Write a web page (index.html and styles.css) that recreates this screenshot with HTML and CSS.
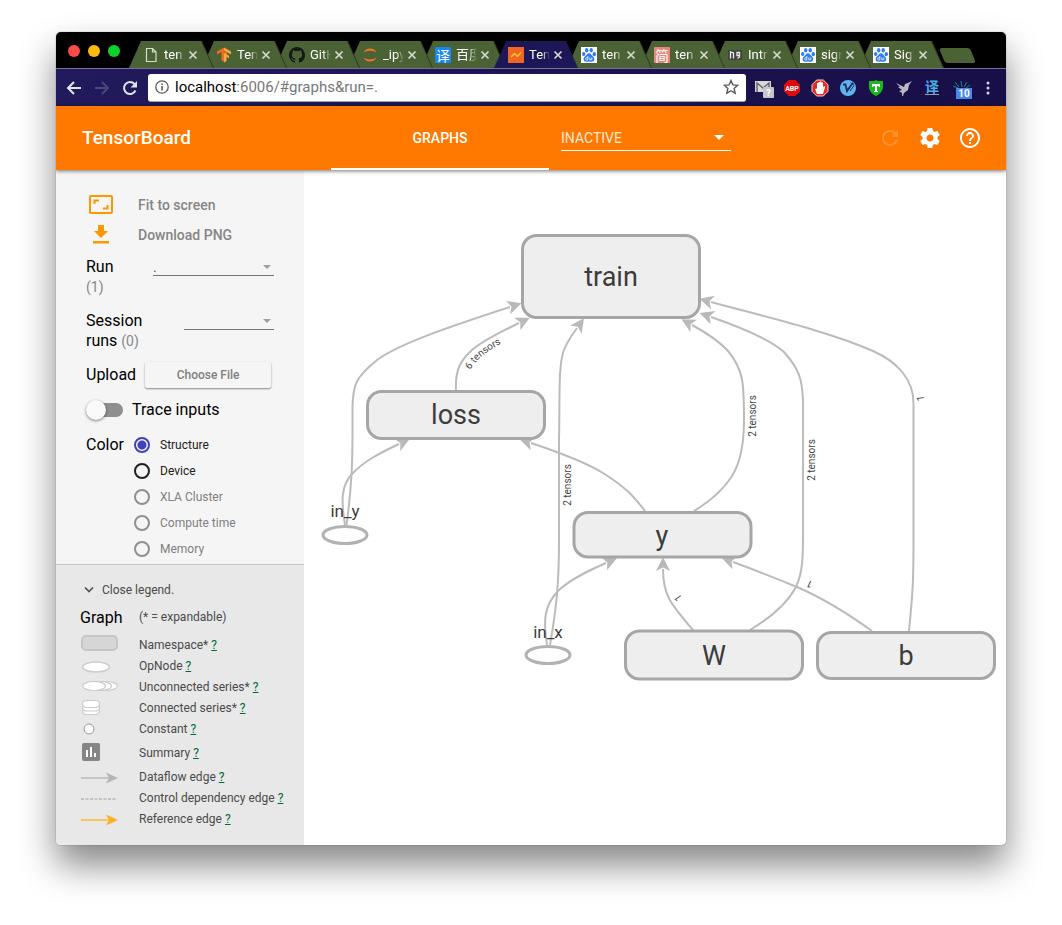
FILE: index.html
```html
<!DOCTYPE html>
<html lang="en">
<head>
<meta charset="utf-8">
<title>TensorBoard</title>
<link rel="stylesheet" href="styles.css">
</head>
<body>
<svg class="defs" width="0" height="0" aria-hidden="true">
  <symbol id="close" viewBox="0 0 10 10"><path d="M1.5 1.5l7 7M8.500 1.500l-7 7" stroke="#d5dacf" stroke-width="1.700" fill="none"/></symbol>
  <symbol id="paw" viewBox="0 0 16 16"><path fill="#fff" d="M0 0h16v16H0z"/><g fill="#2f7df0"><ellipse cx="5.700" cy="3.300" rx="1.700" ry="2.200"/><ellipse cx="10.200" cy="3.300" rx="1.700" ry="2.200"/><ellipse cx="2.700" cy="7" rx="1.700" ry="2.100"/><ellipse cx="13.300" cy="7.200" rx="1.700" ry="2.100"/><path d="M8 6.300c2 0 2.500 2 4 3.200 2.200 1.800 1.500 5.200-1.200 5.200-1.300 0-1.800-.3-2.800-.3s-1.700.3-2.900.3c-2.700 0-3.300-3.500-1.200-5.200C5.500 8.300 6 6.300 8 6.300z"/></g><path d="M6.800 9v4H5.500a1.200 1.200 0 010-2.300h1.300M8.800 10.500v2.200h2v-2.200" fill="none" stroke="#fff" stroke-width=".8"/></symbol>
</svg>

<div class="window">
  <div class="tabstrip">
    <div class="lights"><i class="light red"></i><i class="light amber"></i><i class="light green"></i></div>
    <ul class="tabs">
      <li class="tab"><div class="tab-body"><svg class="fav" viewBox="0 0 16 16"><path d="M3.500 1.500h6l3.500 3.500v9.500H3.500zM9.500 1.500V5H13" fill="none" stroke="#d8ddd2" stroke-width="1.200"/></svg><span class="tab-title">ten</span><svg class="x"><use href="#close"/></svg></div></li>
      <li class="tab"><div class="tab-body"><svg class="fav" viewBox="0 0 16 16"><path fill="#f26b21" d="M8 .5L1 4.500v3l4.500-2.500v8L8 15z"/><path fill="#ffa63f" d="M8 .5l7 4v3l-4.500-2.500v2.200l2.500 1.500v2.500l-2.500-1.400V14L8 15.500z"/><path fill="#e2571e" d="M8 3.500l3 1.600-3 1.500z"/></svg><span class="tab-title">Ten</span><svg class="x"><use href="#close"/></svg></div></li>
      <li class="tab"><div class="tab-body"><svg class="fav" viewBox="0 0 16 16"><path fill="#15191a" d="M8 0C3.580 0 0 3.580 0 8c0 3.540 2.290 6.530 5.470 7.590.4.070.55-.17.55-.38 0-.19-.01-.82-.01-1.490-2.010.37-2.530-.49-2.690-.94-.09-.23-.48-.94-.82-1.130-.28-.15-.68-.52-.01-.53.63-.01 1.080.58 1.230.82.72 1.210 1.870.87 2.330.66.070-.52.28-.87.51-1.070-1.780-.2-3.640-.89-3.640-3.950 0-.87.31-1.590.82-2.150-.08-.2-.36-1.020.08-2.120 0 0 .67-.21 2.200.82a7.600 7.600 0 014 0c1.530-1.040 2.200-.82 2.200-.82.44 1.100.16 1.920.08 2.120.51.56.82 1.270.82 2.150 0 3.070-1.870 3.750-3.650 3.950.29.25.54.73.54 1.480 0 1.070-.01 1.930-.01 2.200 0 .21.15.46.55.38A8 8 0 0016 8c0-4.420-3.580-8-8-8z"/></svg><span class="tab-title">GitH</span><svg class="x"><use href="#close"/></svg></div></li>
      <li class="tab"><div class="tab-body"><svg class="fav" viewBox="0 0 16 16"><path d="M1.300 5.500C4 .2 12 .2 14.700 5.500 11 3 5 3 1.300 5.500zM1.300 10.500c2.700 5.300 10.700 5.300 13.400 0-3.700 2.500-9.700 2.500-13.400 0z" fill="#f37726"/></svg><span class="tab-title">_ipy</span><svg class="x"><use href="#close"/></svg></div></li>
      <li class="tab"><div class="tab-body"><span class="fav glyph blue">译</span><span class="tab-title">百度</span><svg class="x"><use href="#close"/></svg></div></li>
      <li class="tab active"><div class="tab-body"><svg class="fav" viewBox="0 0 16 16"><path fill="#f26522" d="M0 0h16v16H0z"/><path d="M3 10l3.500-3.500 3 3L13 5.500" stroke="#ffc233" stroke-width="1.500" fill="none"/></svg><span class="tab-title">Ten</span><svg class="x"><use href="#close"/></svg></div></li>
      <li class="tab"><div class="tab-body"><svg class="fav"><use href="#paw"/></svg><span class="tab-title">ten</span><svg class="x"><use href="#close"/></svg></div></li>
      <li class="tab"><div class="tab-body"><span class="fav glyph pink">简</span><span class="tab-title">ten</span><svg class="x"><use href="#close"/></svg></div></li>
      <li class="tab"><div class="tab-body"><svg class="fav" viewBox="0 0 16 16"><path fill="#40443f" d="M1 3h6l1 1 1-1h6v10H9l-1 1-1-1H1z"/><path d="M3.500 11.500V5L6.500 6v5.500M12.500 8.500H10V5.500h2.500V10L10.500 11.500" stroke="#e8eae6" stroke-width="1.300" fill="none"/></svg><span class="tab-title">Intr</span><svg class="x"><use href="#close"/></svg></div></li>
      <li class="tab"><div class="tab-body"><svg class="fav"><use href="#paw"/></svg><span class="tab-title">sigr</span><svg class="x"><use href="#close"/></svg></div></li>
      <li class="tab"><div class="tab-body"><svg class="fav"><use href="#paw"/></svg><span class="tab-title">Sig</span><svg class="x"><use href="#close"/></svg></div></li>
    </ul>
    <button class="new-tab" aria-label="New tab"></button>
  </div>

  <div class="toolbar">
    <button class="nav" aria-label="Back"><svg viewBox="0 0 16 16"><path d="M15 8H2M8 2L2 8l6 6" fill="none" stroke="#e3e2ee" stroke-width="2"/></svg></button>
    <button class="nav" aria-label="Forward"><svg viewBox="0 0 16 16"><path d="M1 8h13M8 2l6 6-6 6" fill="none" stroke="#4c477c" stroke-width="2"/></svg></button>
    <button class="nav" aria-label="Reload"><svg viewBox="0 0 16 16"><path d="M13.500 10.500A6 6 0 1112.500 4" fill="none" stroke="#e3e2ee" stroke-width="2"/><path fill="#e3e2ee" d="M15 1v6.500H8.500z"/></svg></button>
    <div class="address">
      <svg class="info" viewBox="0 0 14 14"><circle cx="7" cy="7" r="6.200" fill="none" stroke="#5a5a5a" stroke-width="1.300"/><path d="M7 6v4.500M7 3.500v1.500" stroke="#5a5a5a" stroke-width="1.600"/></svg>
      <span class="url"><b>localhost</b>:6006/#graphs&amp;run=.</span>
      <svg class="star" viewBox="0 0 16 16"><path d="M8 1.500l1.900 4.400 4.800.4-3.600 3.200 1.100 4.700L8 11.700l-4.200 2.500 1.100-4.700L1.300 6.300l4.800-.4z" fill="none" stroke="#5a5a5a" stroke-width="1.400"/></svg>
    </div>
    <div class="extensions">
      <svg viewBox="0 0 20 20"><path fill="#d7d7d7" d="M1 3h16v11H1z"/><path d="M3 14V5l6 5 6-5v9" fill="none" stroke="#666" stroke-width="1.500"/><rect x="9" y="9" width="11" height="11" rx="1" fill="#c6c6ca"/><text x="14.500" y="18" class="ext-mark">?</text></svg>
      <svg viewBox="0 0 20 20"><path fill="#e00b0b" d="M6.700 2h6.600L18 6.700v6.600L13.300 18H6.700L2 13.300V6.700z"/><text x="10" y="12.500" class="ext-abp">ABP</text></svg>
      <svg viewBox="0 0 20 20"><path fill="#e32b20" stroke="#f5d0cc" d="M6.700 2h6.600L18 6.700v6.600L13.300 18H6.700L2 13.300V6.700z"/><path d="M7 16l-2-5 1.500-.5L7 11V5h1.400v4V4H10v5-5.500h1.400V9 4.500H13v5l1-1.500 1.200.8L13 16z" fill="#fff"/></svg>
      <svg viewBox="0 0 20 20"><circle cx="10" cy="10" r="8" fill="#5fb4ee"/><path d="M5 6.500h2.500L9 13l5-7 1.500-1" fill="none" stroke="#1c2c60" stroke-width="1.800"/><path d="M13 4.500l3 3L12 13" fill="none" stroke="#1c2c60"/></svg>
      <svg viewBox="0 0 20 20"><path fill="#18ba1b" d="M10 2l2 1h5v6c0 4-3 7-7 9-4-2-7-5-7-9V3h5z"/><path fill="#fff" d="M6 6h8v3h-1l-1-1h-1v5h1v1H8v-1h1V8H8L7 9H6z"/></svg>
      <svg viewBox="0 0 20 20"><path fill="#b9b9c4" d="M2 5l8 4 1-3 3-1 4-2-3 4-1 5-4 3-1 3H8v-3l-3-2 3-1-4-3h2z"/></svg>
      <svg viewBox="0 0 20 20"><text x="10" y="14" class="ext-cjk">译</text><path fill="#8aa4bf" d="M3 16h14v1H3z"/></svg>
      <svg class="wide" viewBox="0 0 24 20"><path d="M5 4l4 5M11 3l1 6M17 4l-3 5M20 7l-4 3M3 8l5 2" stroke="#1b8b83" fill="none"/><rect x="6" y="10" width="16" height="11" fill="#4688ee"/><text x="14" y="19" class="ext-count">10</text></svg>
    </div>
    <button class="menu" aria-label="Menu"><svg viewBox="0 0 4 16"><circle cx="2" cy="3" r="1.500"/><circle cx="2" cy="8" r="1.500"/><circle cx="2" cy="13" r="1.500"/></svg></button>
  </div>

  <header class="header">
    <h1 class="brand">TensorBoard</h1>
    <a class="header-tab" href="#graphs">GRAPHS</a>
    <div class="inactive">
      <select class="inactive-select" aria-label="Inactive dashboards"><option>INACTIVE</option></select>
      <svg class="caret" viewBox="0 0 10 5"><path fill="#fff" d="M0 0h10L5 5z"/></svg>
    </div>
    <div class="actions">
      <button class="action" aria-label="Reload data" disabled><svg viewBox="0 0 24 24"><path d="M17.650 6.350A7.958 7.958 0 0012 4c-4.420 0-7.990 3.580-7.990 8s3.570 8 7.990 8c3.730 0 6.840-2.550 7.730-6h-2.080A5.990 5.990 0 0112 18c-3.310 0-6-2.690-6-6s2.690-6 6-6c1.660 0 3.140.69 4.220 1.780L13 11h7V4l-2.350 2.350z"/></svg></button>
      <button class="action" aria-label="Settings"><svg viewBox="0 0 24 24"><path d="M19.430 12.980c.04-.32.070-.64.070-.98s-.03-.66-.07-.98l2.110-1.650c.19-.15.24-.42.12-.64l-2-3.460c-.12-.22-.39-.3-.61-.22l-2.490 1c-.52-.4-1.080-.73-1.690-.98l-.38-2.650A.488.488 0 0014 2h-4c-.25 0-.46.18-.49.42l-.38 2.650c-.61.25-1.170.59-1.690.98l-2.490-1c-.23-.09-.49 0-.61.22l-2 3.460c-.13.22-.07.49.12.64l2.110 1.650c-.04.32-.07.65-.07.98s.03.66.070.98l-2.110 1.650c-.19.15-.24.42-.12.64l2 3.460c.12.22.39.3.61.22l2.490-1c.52.4 1.080.73 1.690.98l.38 2.650c.03.24.24.42.49.42h4c.25 0 .46-.18.49-.42l.38-2.650c.61-.25 1.170-.59 1.690-.98l2.490 1c.23.09.49 0 .61-.22l2-3.460c.12-.22.070-.49-.12-.64l-2.110-1.650zM12 15.500c-1.930 0-3.500-1.570-3.500-3.500s1.570-3.500 3.500-3.500 3.500 1.570 3.500 3.500-1.570 3.500-3.500 3.500z"/></svg></button>
      <button class="action" aria-label="Help"><svg viewBox="0 0 24 24"><path d="M11 18h2v-2h-2v2zm1-16C6.480 2 2 6.480 2 12s4.480 10 10 10 10-4.480 10-10S17.520 2 12 2zm0 18c-4.410 0-8-3.590-8-8s3.590-8 8-8 8 3.590 8 8-3.590 8-8 8zm0-14c-2.210 0-4 1.790-4 4h2c0-1.100.9-2 2-2s2 .9 2 2c0 2-3 1.750-3 5h2c0-2.250 3-2.500 3-5 0-2.210-1.790-4-4-4z"/></svg></button>
    </div>
  </header>

  <main class="content">
    <aside class="sidebar">
      <form class="controls">
        <button type="button" class="tool"><svg viewBox="0 0 24 20"><path fill="none" stroke="#ff9800" stroke-width="2" d="M2 1h20a1 1 0 011 1v15a1 1 0 01-1 1H2a1 1 0 01-1-1V2a1 1 0 011-1zM5.500 9V5.500H10M18.500 10v3.500H14"/></svg><span>Fit to screen</span></button>
        <button type="button" class="tool"><svg viewBox="0 0 24 20"><path fill="#ff9800" d="M9 0h6v6h4l-7 7-7-7h4zM4 16h16v2.500H4z"/></svg><span>Download PNG</span></button>
        <div class="field run">
          <label for="run">Run <small>(1)</small></label>
          <div class="pick"><select id="run"><option>.</option></select><svg class="drop" viewBox="0 0 8 4"><path d="M0 0h8L4 4z"/></svg></div>
        </div>
        <div class="field session">
          <label for="session">Session runs <small>(0)</small></label>
          <div class="pick"><select id="session"></select><svg class="drop" viewBox="0 0 8 4"><path d="M0 0h8L4 4z"/></svg></div>
        </div>
        <div class="upload"><span>Upload</span><button type="button" class="choose">Choose File</button></div>
        <label class="trace"><input type="checkbox" class="toggle"><span>Trace inputs</span></label>
        <div class="color" role="radiogroup" aria-labelledby="color-title">
          <span id="color-title">Color</span>
          <div class="options">
            <label><input type="radio" name="color" checked>Structure</label>
            <label><input type="radio" name="color">Device</label>
            <label><input type="radio" name="color" disabled>XLA Cluster</label>
            <label><input type="radio" name="color" disabled>Compute time</label>
            <label><input type="radio" name="color" disabled>Memory</label>
          </div>
        </div>
      </form>
      <section class="legend">
        <button class="close-legend"><svg viewBox="0 0 10 6"><path d="M1 .5l4 4 4-4" fill="none" stroke="#555" stroke-width="1.700"/></svg>Close legend.</button>
        <div class="legend-head"><h2>Graph</h2><span>(* = expandable)</span></div>
        <ul class="keys">
          <li><svg viewBox="0 0 40 20"><rect x="2" y="1" width="35" height="14" rx="4" fill="#d6d6d6" stroke="#c6c6c6" stroke-width="2"/></svg><span>Namespace* <a href="#namespace">?</a></span></li>
          <li><svg viewBox="0 0 40 20"><ellipse cx="16" cy="11" rx="13.500" ry="5" fill="#fff" stroke="#ccc" stroke-width="1.500"/></svg><span>OpNode <a href="#opnode">?</a></span></li>
          <li><svg viewBox="0 0 40 20"><g fill="#fff" stroke="#ccc" stroke-width="1.200"><ellipse cx="26" cy="9" rx="11.500" ry="4.500"/><ellipse cx="20" cy="9" rx="11.500" ry="4.500"/><ellipse cx="14" cy="9" rx="11.500" ry="4.500"/></g></svg><span>Unconnected series* <a href="#unconnected">?</a></span></li>
          <li><svg viewBox="0 0 40 20"><g fill="#fff" stroke="#ccc" stroke-width="1.200"><rect x="2.500" y="9.500" width="17" height="7" rx="4"/><rect x="2.500" y="6" width="17" height="7" rx="4"/><rect x="2.500" y="2.500" width="17" height="7" rx="4"/></g></svg><span>Connected series* <a href="#connected">?</a></span></li>
          <li><svg viewBox="0 0 40 20"><circle cx="9" cy="10" r="5" fill="#fff" stroke="#999"/></svg><span>Constant <a href="#constant">?</a></span></li>
          <li class="tall"><svg viewBox="0 0 40 20"><rect x="2" width="18" height="18" y="0" rx="2" fill="#868686"/><path fill="#fff" d="M6 7h2v7H6zM10 4h2v10h-2zM14 10h2v4h-2z"/></svg><span>Summary <a href="#summary">?</a></span></li>
          <li><svg viewBox="0 0 40 20"><path d="M1 11h28" stroke="#bababa" stroke-width="1.500"/><path fill="#b5b5b5" d="M26 5.500L38 11l-12 5.500 3-5.500z"/></svg><span>Dataflow edge <a href="#dataflow">?</a></span></li>
          <li><svg viewBox="0 0 40 20"><path d="M1 11h36" stroke="#b5b5b5" stroke-width="1.500" stroke-dasharray="3 1.500"/></svg><span>Control dependency edge <a href="#control">?</a></span></li>
          <li><svg viewBox="0 0 40 20"><path d="M1 11h28" stroke="#ffb938" stroke-width="1.500"/><path fill="#ffb020" d="M26 5.500L38 11l-12 5.500 3-5.500z"/></svg><span>Reference edge <a href="#reference">?</a></span></li>
        </ul>
      </section>
    </aside>

    <svg class="graph" viewBox="304 170 702 675" preserveAspectRatio="xMidYMin meet" role="img" aria-label="Main graph">
      <defs>
        <marker id="head" markerUnits="userSpaceOnUse" markerWidth="14" markerHeight="14" refX="2" refY="7" orient="auto"><path d="M0 0l14 7-14 7 3.500-7z" fill="#b9b9b9"/></marker>
        <path id="six" d="M470 370C477 359 486 351 508 340"/>
      </defs>
      <g class="edges">
        <path d="M346.500 525C352 485 352.500 460 352.500 430V407C353 385 355 378 377 360C400 343 455 325 510 307"/>
        <path d="M345 525C341 500 341 486 352 474C364 461 380 453 399 444"/>
        <path d="M456 391C455 370 460 361 472 350C485 339 505 330 519 323"/>
        <path d="M550 645C557 605 559 580 559 540V440C560 400 558 365 564 350C568 340 572 335 577 328"/>
        <path d="M547 645C543 620 544 606 558 591C570 579 590 570 606 563"/>
        <path d="M645 511C633 496 628 489 603 473C585 462 555 451 531 443"/>
        <path d="M694 511C712 500 724 489 732 476C742 460 744 440 744 420C744 385 744 370 728 351C718 340 705 332 692 325"/>
        <path d="M750 630C770 618 787 604 796 587C803 572 803 555 803 535V400C802 380 800 370 784 352C768 338 740 327 711 317"/>
        <path d="M909 631C913 590 913.500 580 913.500 540V403C913.500 380 898 362 873 351C830 332 770 318 711 302"/>
        <path d="M693 630C670 603 663 595 663 569"/>
        <path d="M872 631C847 613 825 599 797 587C775 578 755 570 733 562"/>
      </g>
      <g class="edge-labels">
        <text class="along"><textPath href="#six">6 tensors</textPath></text>
        <text transform="translate(571 485) rotate(-90)">2 tensors</text>
        <text transform="translate(756 416) rotate(-90)">2 tensors</text>
        <text transform="translate(815 460) rotate(-90)">2 tensors</text>
        <text transform="translate(924 398) rotate(-97)">1</text>
        <text transform="translate(811 581) rotate(-155)">1</text>
        <text transform="translate(681 596) rotate(-125)">1</text>
      </g>
      <g class="nodes">
        <rect x="522.500" y="235.500" width="177" height="82" rx="14"/>
        <rect x="367.500" y="391.500" width="177" height="47" rx="14"/>
        <rect x="574" y="512.500" width="177" height="44.500" rx="14"/>
        <rect x="625.500" y="631" width="177" height="48" rx="14"/>
        <rect x="817.500" y="632.500" width="177" height="46" rx="14"/>
      </g>
      <g class="ops">
        <ellipse cx="345" cy="535" rx="22" ry="8.500"/>
        <ellipse cx="548" cy="655" rx="22" ry="8.500"/>
      </g>
      <g class="node-labels">
        <text x="611" y="286">train</text>
        <text x="456" y="424">loss</text>
        <text x="662" y="545">y</text>
        <text x="714" y="665">W</text>
        <text x="906" y="665">b</text>
      </g>
      <g class="op-labels">
        <text x="345" y="517">in_y</text>
        <text x="548" y="638">in_x</text>
      </g>
    </svg>
  </main>
</div>
</body>
</html>
```
FILE: styles.css
```css
* { box-sizing: border-box; }

body {
  margin: 0;
  min-height: 100vh;
  padding: 32px 56px 80px;
  display: flex;
  flex-direction: column;
  background: #fff;
  font-family: Roboto, "Noto Sans", "Noto Sans CJK SC", sans-serif;
  color: #000;
}

ul { list-style: none; margin: 0; padding: 0; }
h1, h2 { margin: 0; font-weight: 400; }
button, select { font: inherit; color: inherit; border: 0; background: none; padding: 0; border-radius: 0; }
svg { display: block; flex: none; }
.defs { position: absolute; }

.window {
  flex: 1;
  display: flex;
  flex-direction: column;
  border-radius: 5px;
  overflow: hidden;
  box-shadow: 0 0 1px rgba(0, 0, 0, .7), 0 20px 36px rgba(0, 0, 0, .48);
}

/* Browser frame */
.tabstrip { display: flex; align-items: flex-end; height: 36px; background: #000; }
.lights { display: flex; gap: 8px; padding: 0 9px 11px 12px; }
.light { width: 12px; height: 12px; border-radius: 50%; }
.red { background: #fc4b48; }
.amber { background: #fdbc0c; }
.green { background: #0ad32c; }
.tabs { display: flex; }
.tab { width: 84px; margin-right: -11px; filter: drop-shadow(1px 0 0 #2c3b21); }
.tab:nth-child(1) { z-index: 11; }
.tab:nth-child(2) { z-index: 10; }
.tab:nth-child(3) { z-index: 9; }
.tab:nth-child(4) { z-index: 8; }
.tab:nth-child(5) { z-index: 7; }
.tab:nth-child(7) { z-index: 5; }
.tab:nth-child(8) { z-index: 4; }
.tab:nth-child(9) { z-index: 3; }
.tab:nth-child(10) { z-index: 2; }
.tab:nth-child(11) { z-index: 1; }
.tab.active { z-index: 12; filter: none; }
.tab-body {
  display: flex;
  align-items: center;
  height: 27px;
  padding: 0 14px;
  background: #4b6234;
  clip-path: polygon(0 100%, 12px 0, calc(100% - 12px) 0, 100% 100%);
}
.tab.active .tab-body { background: #1e1757; }
.fav { width: 16px; height: 16px; flex: none; }
.glyph { font: 14px/16px "Noto Sans CJK SC", sans-serif; text-align: center; color: #fff; border-radius: 1px; }
.blue { background: #1687f5; }
.pink { background: #e5877b; }
.tab-title {
  width: 21px;
  margin: 0 3px 0 5px;
  overflow: hidden;
  white-space: nowrap;
  font-size: 13px;
  line-height: 18px;
  color: #fff;
  mask-image: linear-gradient(90deg, #000 60%, transparent);
}
.x { width: 10px; height: 10px; }
.new-tab { width: 31px; height: 15px; margin: 0 0 5px 10px; background: #4b6234; border-radius: 3px; transform: skewX(22deg); }

.toolbar {
  display: flex;
  align-items: center;
  height: 38px;
  padding: 0 16px 0 10px;
  border-top: 1px solid #75719a;
  background: linear-gradient(90deg, #211a5c, #180f48);
}
.nav { width: 16px; margin-right: 12px; }
.nav svg { width: 16px; height: 16px; }
.nav:nth-of-type(3) { margin-right: 10px; }
.address {
  flex: 1;
  display: flex;
  align-items: center;
  height: 28px;
  padding: 0 7px;
  border-radius: 3px;
  border-bottom: 1px solid #a5a5a5;
  background: #fff;
}
.info { width: 14px; height: 14px; }
.url { flex: 1; margin-left: 6px; font-size: 15px; line-height: 20px; color: #777; }
.url b { font-weight: 400; color: #000; }
.star { width: 16px; height: 16px; }
.extensions { display: flex; gap: 8px; margin-left: 8px; }
.extensions svg { width: 20px; height: 20px; overflow: visible; }
.extensions .wide { width: 24px; }
.ext-mark, .ext-abp, .ext-count { fill: #fff; font-weight: 700; text-anchor: middle; }
.ext-mark { font-size: 9px; }
.ext-abp { font-size: 7px; }
.ext-count { font-size: 10px; }
.ext-cjk { fill: #47b0ea; font: 700 14px "Noto Sans CJK SC", sans-serif; text-anchor: middle; }
.menu { width: 4px; margin-left: 12px; }
.menu svg { width: 4px; height: 16px; fill: #d5d4e4; }

/* Application header */
.header {
  display: flex;
  align-items: center;
  height: 64px;
  padding: 0 24px 0 26px;
  background: #ff7800;
  color: #fff;
  box-shadow: 0 1px 4px rgba(0, 0, 0, .55);
  z-index: 1;
}
.brand { flex: 0 0 249px; font-size: 19px; font-weight: 500; line-height: 24px; }
.header-tab {
  flex: 0 0 218px;
  height: 64px;
  line-height: 64px;
  border-bottom: 2px solid #fff;
  text-align: center;
  font-size: 14px;
  font-weight: 500;
  color: #fff;
  text-decoration: none;
}
.inactive { display: flex; align-items: center; flex: 0 0 170px; height: 26px; margin-left: 12px; border-bottom: 1px solid #fff; }
.inactive-select { flex: 1; appearance: none; font-size: 14px; line-height: 24px; color: #ffe8d4; }
.caret { width: 10px; height: 5px; margin-right: 7px; }
.actions { display: flex; gap: 16px; margin-left: auto; }
.action { width: 24px; height: 24px; }
.action svg { width: 24px; height: 24px; fill: #fff; }
.action:disabled { opacity: .2; }

.content { flex: 1; display: flex; background: #fff; }
.graph { flex: 1; min-width: 0; font-family: Roboto, sans-serif; }

/* Sidebar */
.sidebar { flex: 0 0 248px; display: flex; flex-direction: column; background: #f5f5f5; }
.controls { padding: 20px 30px 2px; font-size: 16px; line-height: 20px; }
.tool { display: flex; align-items: center; width: 100%; height: 30px; font-size: 14px; font-weight: 500; color: #858585; }
.tool svg { width: 24px; height: 20px; margin: 0 25px 0 3px; }
.field { display: flex; justify-content: space-between; margin-top: 14px; }
.field.run { margin-top: 7px; }
.field small { font-size: 14px; line-height: 16px; color: #888; }
.field label { width: 64px; }
.run label { width: 40px; }
.pick { display: flex; align-items: center; width: 121px; height: 19px; border-bottom: 1px solid #757575; }
.session .pick { width: 90px; }
.pick select { flex: 1; min-width: 0; height: 18px; appearance: none; font-size: 14px; color: #555; }
.drop { width: 8px; height: 4px; margin: 2px 3px 0 0; fill: #a0a0a0; }
.upload { display: flex; align-items: center; height: 28px; margin-top: 10px; }
.choose {
  flex: 1;
  height: 26px;
  margin: 0 3px 0 9px;
  border-radius: 2px;
  background: #f5f5f5;
  box-shadow: 0 1px 2px rgba(0, 0, 0, .45);
  font-size: 12px;
  font-weight: 500;
  color: #808080;
}
.trace { display: flex; align-items: center; gap: 9px; height: 20px; margin-top: 11px; }
.toggle { appearance: none; flex: none; display: grid; align-items: center; width: 37px; height: 20px; margin: 0; }
.toggle::before, .toggle::after { content: ""; grid-area: 1 / 1; }
.toggle::before { justify-self: end; width: 33px; height: 14px; border-radius: 7px; background: #8f8f8f; }
.toggle::after { width: 20px; height: 20px; border-radius: 50%; background: #fafafa; box-shadow: 0 1px 3px rgba(0, 0, 0, .5); }
.color { display: grid; grid-template-columns: 48px 1fr; line-height: 26px; margin-top: 12px; }
.options label { display: flex; align-items: center; gap: 10px; height: 26px; font-size: 12px; color: #212121; }
.options label:has(:disabled) { color: #808080; }
.options input { appearance: none; width: 16px; height: 16px; margin: 0; border: 2px solid #212121; border-radius: 50%; }
.options input:checked { border-color: #4141bb; background: radial-gradient(circle, #4141bb 4px, transparent 5px); }
.options input:disabled { border-color: #909090; }

.legend { flex: 1; padding: 15px 8px 15px 24px; border-top: 1px solid #c6c6c6; background: #e8e8e8; font-size: 12px; color: #4a4a4a; }
.close-legend { display: flex; align-items: center; gap: 8px; height: 20px; padding-left: 4px; }
.close-legend svg { width: 10px; height: 6px; }
.legend-head { display: flex; align-items: center; height: 20px; margin: 7px 0; }
.legend-head h2 { width: 59px; font-size: 16px; color: #000; }
.keys li { display: flex; align-items: center; height: 21px; white-space: nowrap; }
.keys .tall { height: 27px; }
.keys svg { width: 40px; height: 20px; margin-right: 19px; }
.keys a { color: #006b38; }

/* Graph canvas */
.edges path { fill: none; stroke: #bbb; stroke-width: 2; marker-end: url(#head); }
.edge-labels text { font-size: 10px; fill: #444; text-anchor: middle; }
.edge-labels .along { text-anchor: start; }
.nodes rect { fill: #eee; stroke: #a6a6a6; stroke-width: 3; }
.node-labels text { font-size: 27px; fill: #3c3c3c; text-anchor: middle; }
.ops ellipse { fill: #fff; stroke: #b2b2b2; stroke-width: 3; }
.op-labels text { font-size: 17px; fill: #3c3c3c; text-anchor: middle; }
```
